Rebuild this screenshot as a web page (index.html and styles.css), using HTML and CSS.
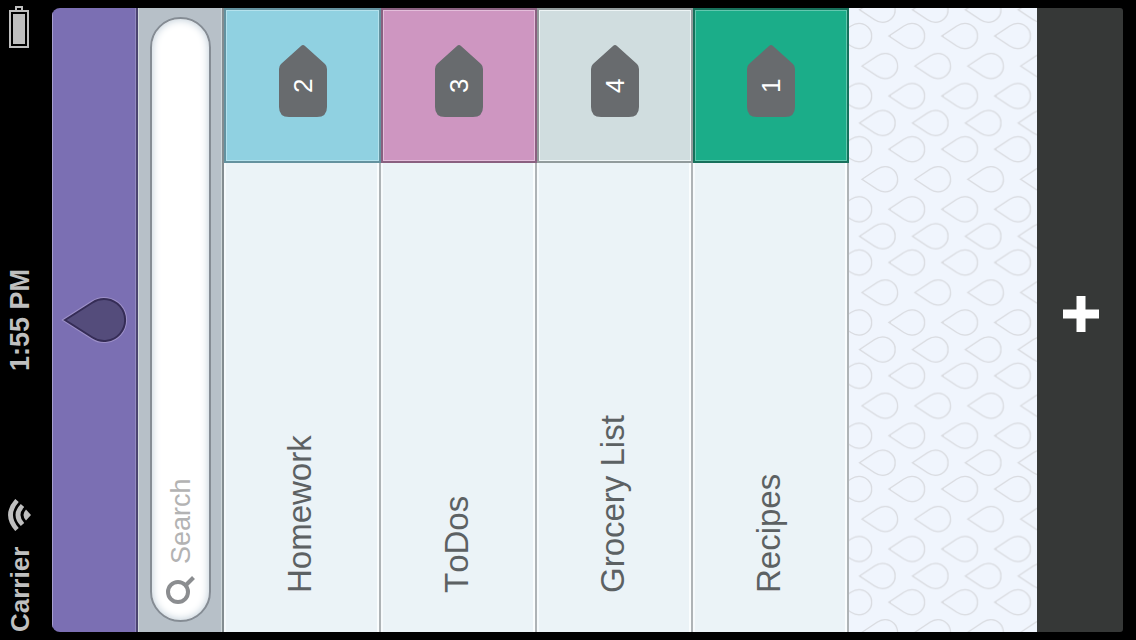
FILE: index.html
```html
<!DOCTYPE html>
<html lang="en">
<head>
<meta charset="utf-8">
<title>Lists</title>
<link rel="stylesheet" href="styles.css">
</head>
<body>
<div class="stage">
<div class="device">
  <div class="status">
    <div class="status-left">
      <span class="carrier">Carrier</span>
      <svg class="wifi" width="32" height="24" viewBox="0 0 32 24" aria-hidden="true">
        <path d="M16 23L10.500 18Q16 13 21.500 18Z" fill="#bfbfbf"/>
        <path d="M6.500 14.500Q16 5.500 25.500 14.500M1.500 9Q16 -4 30.500 9" fill="none" stroke="#bfbfbf" stroke-width="4.700"/>
      </svg>
    </div>
    <span class="time">1:55 PM</span>
    <svg class="battery" width="42" height="20" viewBox="0 0 42 20" aria-hidden="true">
      <path d="M1 1H37V19H1ZM37 7H41V13H37" fill="none" stroke="#bfbfbf" stroke-width="2"/>
      <path d="M4 4H34V16H4Z" fill="#bfbfbf"/>
    </svg>
  </div>

  <main class="app">
    <header class="header">
      <svg width="52" height="72" viewBox="0 0 52 72" role="img" aria-label="Drop">
        <path d="M26 6L43.500 33.500A21 21 0 1 1 8.500 33.500Z" fill="#9d90c8" stroke="#9d90c8" stroke-width="4"/>
        <path d="M26 6L43.500 33.500A21 21 0 1 1 8.500 33.500Z" fill="#544c7b" stroke="#352c56" stroke-width="2"/>
      </svg>
    </header>

    <form class="search">
      <label class="pill">
        <svg width="30" height="30" viewBox="0 0 30 30" aria-hidden="true">
          <circle cx="12" cy="12" r="10" fill="none" stroke="#8b8d90" stroke-width="4"/>
          <path d="M18.500 19.500L26.500 27.500" stroke="#8b8d90" stroke-width="4"/>
        </svg>
        <input type="text" placeholder="Search" aria-label="Search">
      </label>
    </form>

    <ul class="lists">
      <li class="row">
        <a class="name" href="#homework">Homework</a>
        <div class="tile blue"><div class="badge">
          <svg viewBox="0 0 72 48" aria-hidden="true"><path d="M10 0H48Q51 0 53 2L71 22Q73 24 71 26L53 46Q51 48 48 48H10Q0 48 0 38V10Q0 0 10 0Z"/></svg>
          <span>2</span></div></div>
      </li>
      <li class="row">
        <a class="name" href="#todos">ToDos</a>
        <div class="tile pink"><div class="badge">
          <svg viewBox="0 0 72 48" aria-hidden="true"><path d="M10 0H48Q51 0 53 2L71 22Q73 24 71 26L53 46Q51 48 48 48H10Q0 48 0 38V10Q0 0 10 0Z"/></svg>
          <span>3</span></div></div>
      </li>
      <li class="row">
        <a class="name" href="#grocery">Grocery List</a>
        <div class="tile grey"><div class="badge">
          <svg viewBox="0 0 72 48" aria-hidden="true"><path d="M10 0H48Q51 0 53 2L71 22Q73 24 71 26L53 46Q51 48 48 48H10Q0 48 0 38V10Q0 0 10 0Z"/></svg>
          <span>4</span></div></div>
      </li>
      <li class="row">
        <a class="name" href="#recipes">Recipes</a>
        <div class="tile green"><div class="badge">
          <svg viewBox="0 0 72 48" aria-hidden="true"><path d="M10 0H48Q51 0 53 2L71 22Q73 24 71 26L53 46Q51 48 48 48H10Q0 48 0 38V10Q0 0 10 0Z"/></svg>
          <span>1</span></div></div>
      </li>
    </ul>

    <div class="backdrop">
      <svg width="100%" height="100%" aria-hidden="true">
        <defs>
          <path id="drop" d="M0 0L10 15Q12.600 19 12.600 23A12.600 12.600 0 0 1 -12.600 23Q-12.600 19 -10 15Z" fill="none" stroke="#d9dbe0" stroke-width="1.300"/>
          <pattern id="drops" width="113.250" height="52.900" patternUnits="userSpaceOnUse">
            <use href="#drop" x="29.750" y="-13"/>
            <use href="#drop" x="29.750" y="39.900"/>
            <use href="#drop" x="83" y="-13"/>
            <use href="#drop" x="83" y="39.900"/>
            <use href="#drop" x="56" y="10.500"/>
            <use href="#drop" x="-0.250" y="13"/>
            <use href="#drop" x="113" y="13"/>
          </pattern>
        </defs>
        <rect width="100%" height="100%" fill="url(#drops)"/>
      </svg>
    </div>

    <footer class="footer">
      <button class="add" type="button" aria-label="Add list">
        <svg width="36" height="36" viewBox="0 0 36 36" aria-hidden="true"><path d="M13.500 0H22.500V13.500H36V22.500H22.500V36H13.500V22.500H0V13.500H13.500Z" fill="#fff"/></svg>
      </button>
    </footer>
  </main>
</div>
</div>
</body>
</html>
```
FILE: styles.css
```css
* {
  box-sizing: border-box;
}

body {
  margin: 0;
  background: #000;
  font-family: "Liberation Sans", Arial, sans-serif;
}

svg {
  display: block;
  flex: none;
}

.stage {
  height: 100vh;
  overflow: clip;
}

/* Portrait screen, turned a quarter to the left */
.device {
  display: flex;
  flex-direction: column;
  width: 100vh;
  height: 100vw;
  padding: 0 8px 13px;
  background: #000;
  transform-origin: 0 0;
  transform: translateY(100vh) rotate(-90deg);
}

.status {
  display: grid;
  grid-template-columns: 1fr auto 1fr;
  align-items: center;
  height: 52px;
  padding-bottom: 12px;
  color: #bfbfbf;
  font-weight: bold;
  line-height: 32px;
}

.status-left {
  display: flex;
  align-items: center;
  gap: 16px;
}

.carrier {
  font-size: 26px;
}

.time {
  font-size: 27px;
}

.battery {
  justify-self: end;
  margin: 0 -2px 2px 0;
}

.app {
  display: flex;
  flex: 1;
  flex-direction: column;
  overflow: hidden;
  border-radius: 8px 8px 3px 3px;
}

.header {
  display: flex;
  align-items: center;
  justify-content: center;
  height: 86px;
  border-top: 1px solid #a79fd0;
  border-bottom: 2px solid #4b4470;
  background: #7b6fb3;
  box-shadow: inset 0 -1px #9289c0;
}

.search {
  height: 86px;
  padding: 11px 9px 0 10px;
  border-top: 1px solid #d3d9dd;
  border-bottom: 2px solid #838c90;
  background: #b7c0c8;
  box-shadow: inset 0 -1px #cfd8da;
}

.pill {
  display: flex;
  align-items: center;
  gap: 10px;
  height: 61px;
  padding: 0 16px;
  border: 2px solid #858c94;
  border-radius: 31px;
  background: #fff;
  box-shadow: inset 0 0 8px #b9c8d4;
}

.pill input {
  flex: 1;
  min-width: 0;
  padding: 2px 0 0;
  border: 0;
  outline: 0;
  background: transparent;
  color: #5c6163;
  font: 27px "Liberation Sans", Arial, sans-serif;
}

.pill input::placeholder {
  color: #b3b3b3;
  opacity: 1;
}

.lists {
  margin: 0;
  padding: 0;
  list-style: none;
}

.row {
  display: flex;
  height: 156px;
}

.row:first-child {
  height: 157px;
}

.name {
  flex: 1;
  padding-left: 39px;
  border-bottom: 2px solid #aeb3b6;
  background: #ebf3f7;
  box-shadow: inset 0 2px #f6fafc, inset 0 -2px #fafdfe;
  color: #5c6163;
  font-size: 33px;
  font-kerning: none;
  line-height: 152px;
  text-decoration: none;
}

.tile {
  display: flex;
  align-items: center;
  width: 155px;
  padding-left: 44px;
  border: 2px solid;
}

.blue {
  border-color: #64929f;
  background: #90d1e1;
  box-shadow: inset 0 0 0 1px #b4e2ed;
}

.pink {
  border-color: #8a6080;
  background: #ce96c1;
  box-shadow: inset 0 0 0 1px #e4bedb;
}

.grey {
  border-color: #929b9c;
  background: #d0dddf;
  box-shadow: inset 0 0 0 1px #eef5f6;
}

.green {
  border-color: #17705b;
  background: #1bad89;
  box-shadow: inset 0 0 0 1px #62c8af;
}

.badge {
  display: grid;
  width: 72px;
  height: 48px;
}

.badge svg,
.badge span {
  grid-area: 1 / 1;
}

.badge svg {
  fill: #686b6e;
}

.badge span {
  padding-left: 24px;
  color: #fff;
  font-size: 26px;
  line-height: 48px;
}

.backdrop {
  flex: 1;
  min-height: 0;
  background: #f0f5fd;
}

.footer {
  display: flex;
  align-items: center;
  justify-content: center;
  height: 86px;
  padding: 2px 0 0 12px;
  background: #363837;
}

.add {
  padding: 0;
  border: 0;
  background: none;
}
```
